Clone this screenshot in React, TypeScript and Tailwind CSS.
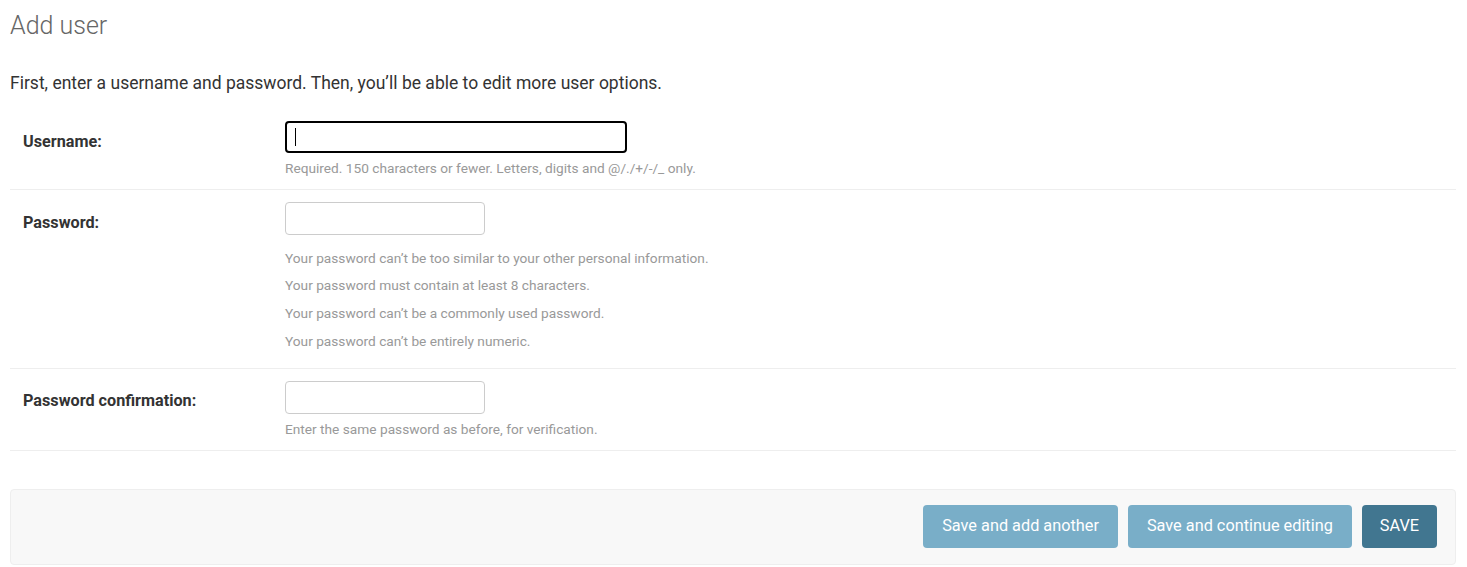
const rows = [
  {
    label: "Username:",
    focused: true,
    help: ["Required. 150 characters or fewer. Letters, digits and @/./+/-/_ only."],
  },
  {
    label: "Password:",
    focused: false,
    help: [
      "Your password can’t be too similar to your other personal information.",
      "Your password must contain at least 8 characters.",
      "Your password can’t be a commonly used password.",
      "Your password can’t be entirely numeric.",
    ],
  },
  {
    label: "Password confirmation:",
    focused: false,
    help: ["Enter the same password as before, for verification."],
  },
];

const App = () => {
  return (
    <div className="min-h-screen bg-white pl-[10px] pr-[11px] font-['Roboto',sans-serif] text-[#333]">
      <h1 className="pt-[9px] text-[25px] font-light leading-[34px] text-[#666]">Add user</h1>
      <p className="mt-[29px] text-[17.5px] leading-[22px]">
        First, enter a username and password. Then, you’ll be able to edit more user options.
      </p>
      <div className="mt-[15px]">
        {rows.map((row) => (
          <div key={row.label} className="flex border-b border-[#eee] pt-[12px] pb-[12px]">
            <label className="w-[275px] shrink-0 pl-[13px] pt-[10.5px] text-[16.2px] font-bold leading-[20px] text-[#333]">
              {row.label}
            </label>
            <div className="flex flex-col">
              {row.focused ? (
                <div className="flex h-[32px] w-[342px] items-center rounded-[4px] border-2 border-black px-[8px]">
                  <span className="h-[18px] w-px bg-black" />
                </div>
              ) : (
                <input
                  type="password"
                  className="h-[33px] w-[200px] rounded-[4px] border border-[#ccc] px-[8px] outline-none"
                />
              )}
              {row.help.length > 1 ? (
                <ul className="mt-[14.5px] mb-[6px] flex flex-col gap-[10.7px] text-[13.7px] leading-[17px] text-[#999]">
                  {row.help.map((h) => (
                    <li key={h}>{h}</li>
                  ))}
                </ul>
              ) : (
                <div className="mt-[7px] text-[13.7px] leading-[17px] text-[#999]">{row.help[0]}</div>
              )}
            </div>
          </div>
        ))}
      </div>
      <div className="mt-[38px] flex justify-end gap-[10px] rounded-[4px] border border-[#eee] bg-[#f8f8f8] pt-[15px] pb-[16px] pr-[18px]">
        <button className="h-[43px] rounded-[4px] bg-[#79aec8] px-[19px] text-[16.3px] text-white">
          Save and add another
        </button>
        <button className="h-[43px] rounded-[4px] bg-[#79aec8] px-[19px] text-[16.3px] text-white">
          Save and continue editing
        </button>
        <button className="h-[43px] rounded-[4px] bg-[#417690] px-[18px] text-[16.3px] text-white">
          SAVE
        </button>
      </div>
    </div>
  );
};

export default App;
